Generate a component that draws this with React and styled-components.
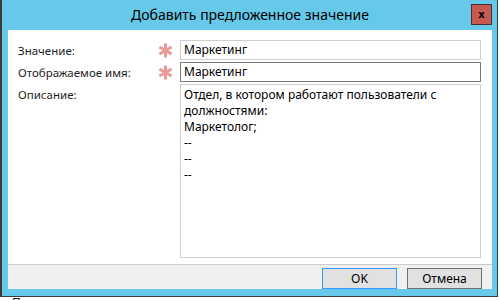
import React from 'react';
import styled, { createGlobalStyle } from 'styled-components';

const GlobalStyle = createGlobalStyle`
  html, body {
    margin: 0;
    padding: 0;
    background: #ffffff;
  }
  body {
    font-family: "Noto Sans", "Liberation Sans", sans-serif;
    color: #000;
  }
`;

const Page = styled.div`
  width: 500px;
  height: 300px;
  overflow: hidden;
  display: flex;
  flex-direction: column;
  background: #ffffff;
`;

const Window = styled.div`
  width: 495px;
  display: flex;
  flex-direction: column;
  background: #66c9e9;
  border-left: 2px solid #3b3b3b;
  border-right: 1px solid #3b3b3b;
  border-bottom: 1px solid #3b3b3b;
  padding-bottom: 7px;
`;

const TitleBar = styled.div`
  height: 30px;
  display: grid;
  grid-template-columns: 1fr auto 1fr;
  align-items: center;
  padding: 0 5px 0 6px;
`;

const Title = styled.div`
  grid-column: 2;
  font-size: 14px;
  color: #000;
  white-space: nowrap;
  margin-top: -1px;
`;

const CloseButton = styled.button`
  grid-column: 3;
  justify-self: end;
  align-self: start;
  margin-top: 4px;
  width: 21px;
  height: 21px;
  padding: 0;
  border: 1px solid #4a3030;
  background: #c75a50;
  color: #000;
  font-family: "DejaVu Sans", sans-serif;
  font-size: 10px;
  font-weight: bold;
  line-height: 17px;
  text-align: center;
`;

const Client = styled.div`
  margin: 0 5px 0 6px;
  background: #ffffff;
  display: flex;
  flex-direction: column;
`;

const Form = styled.div`
  height: 234px;
  box-sizing: border-box;
  padding: 10px 11px 6px 10px;
  display: grid;
  grid-template-columns: 142px 20px 1fr;
  grid-template-rows: 20px 20px 174px;
  row-gap: 2px;
`;

const Label = styled.div`
  font-size: 11.5px;
  color: #1e1e1e;
  align-self: ${(p) => (p.$top ? 'start' : 'center')};
  padding-top: ${(p) => (p.$top ? '3px' : '0')};
  white-space: nowrap;
`;

const Required = styled.div`
  align-self: center;
  display: flex;
  margin-left: -2px;
`;

const Field = styled.div`
  box-sizing: border-box;
  height: 20px;
  border: 1px solid ${(p) => (p.$active ? '#7a7a7a' : '#cfcfcf')};
  padding: 0 3px;
  font-size: 12px;
  line-height: 18px;
  grid-column: 3;
  white-space: nowrap;
`;

const Memo = styled.div`
  box-sizing: border-box;
  grid-column: 3;
  border: 1px solid #cfcfcf;
  padding: 2px 3px;
  font-size: 12px;
  line-height: 16px;
  white-space: pre-line;
`;

const Footer = styled.div`
  height: 25px;
  border-top: 1px solid #cbcbcb;
  background: #f0f0f0;
  display: flex;
  justify-content: flex-end;
  align-items: flex-start;
  gap: 10px;
  padding: 3px 10px 0 0;
  box-sizing: border-box;
`;

const Button = styled.button`
  width: 75px;
  height: 21px;
  box-sizing: border-box;
  border: 1px solid ${(p) => (p.$default ? '#3399ff' : '#707070')};
  background: #e1e1e1;
  font-family: "Noto Sans", "Liberation Sans", sans-serif;
  font-size: 12px;
  color: #000;
  padding: 0;
`;

const Behind = styled.div`
  padding-left: 12px;
  font-size: 12px;
  line-height: 14px;
  margin-top: -1px;
  color: #222;
  white-space: nowrap;
`;

function Asterisk() {
  return (
    <Required>
      <svg width="15" height="15" viewBox="0 0 15 15">
        <g stroke="#eb9a9a" strokeWidth="3" strokeLinecap="butt">
          <line x1="7.5" y1="0.5" x2="7.5" y2="14.5" />
          <line x1="1.4" y1="4" x2="13.6" y2="11" />
          <line x1="1.4" y1="11" x2="13.6" y2="4" />
        </g>
      </svg>
    </Required>
  );
}

const description =
  'Отдел, в котором работают пользователи с\nдолжностями:\nМаркетолог;\n--\n--\n--';

export default function App() {
  return (
    <Page>
      <GlobalStyle />
      <Window>
        <TitleBar>
          <Title>Добавить предложенное значение</Title>
          <CloseButton>x</CloseButton>
        </TitleBar>
        <Client>
          <Form>
            <Label>Значение:</Label>
            <Asterisk />
            <Field>Маркетинг</Field>
            <Label>Отображаемое имя:</Label>
            <Asterisk />
            <Field $active>Маркетинг</Field>
            <Label $top>Описание:</Label>
            <div />
            <Memo>{description}</Memo>
          </Form>
          <Footer>
            <Button $default>OK</Button>
            <Button>Отмена</Button>
          </Footer>
        </Client>
      </Window>
      <Behind>Предлагаемое значение значение</Behind>
    </Page>
  );
}
